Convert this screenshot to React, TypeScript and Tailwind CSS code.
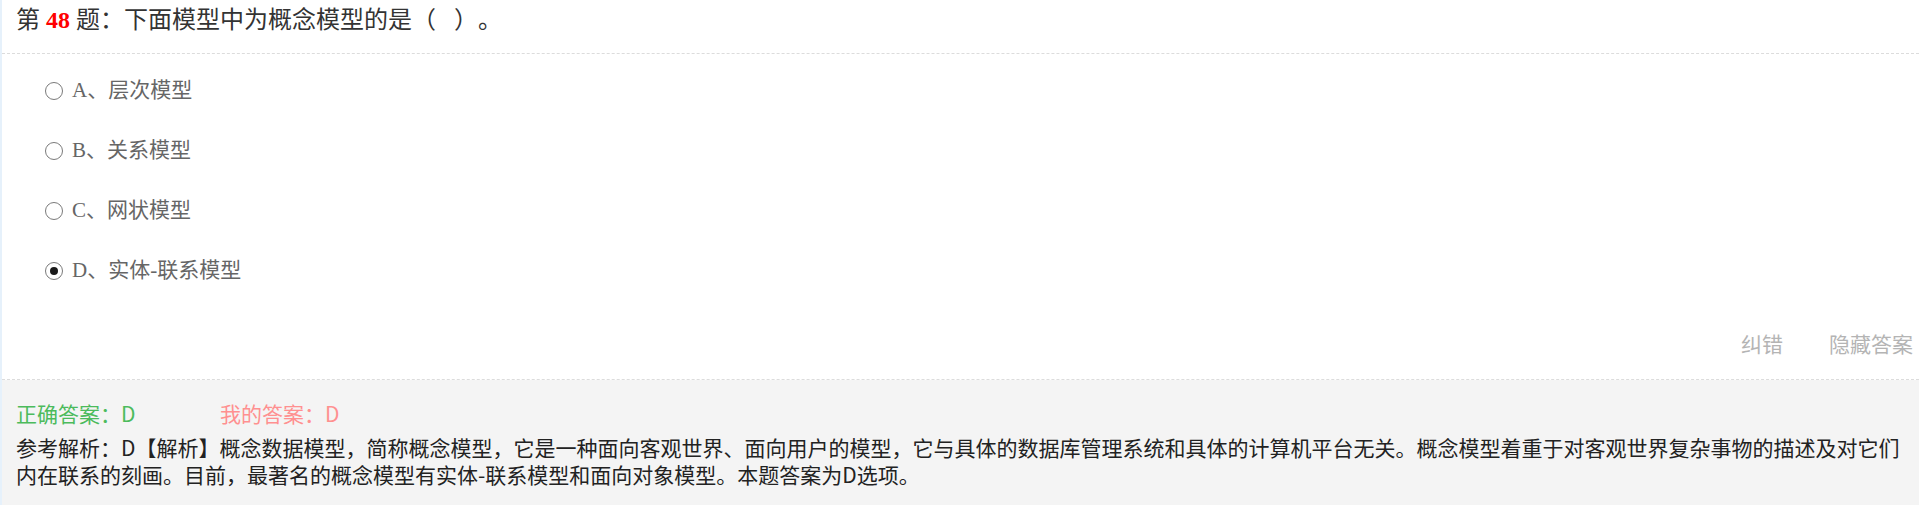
import React from 'react';

interface OptionItem {
  key: string;
  text: string;
}

const options: OptionItem[] = [
  { key: 'A', text: '层次模型' },
  { key: 'B', text: '关系模型' },
  { key: 'C', text: '网状模型' },
  { key: 'D', text: '实体-联系模型' },
];

const myAnswer = 'D';

// radio drawn by hand, native ones look different per platform
const Radio: React.FC<{ checked: boolean }> = ({ checked }) => (
  <span className="flex h-[18px] w-[18px] shrink-0 items-center justify-center rounded-full border-[1.5px] border-[#7a7a7a] bg-white">
    {checked && <span className="h-[8px] w-[8px] rounded-full bg-[#1a1a1a]" />}
  </span>
);

const App: React.FC = () => {
  return (
    <div className="w-[1919px] h-[505px] overflow-hidden border-l-2 border-[#e6f1fb] bg-white [text-spacing-trim:space-all]">
      {/* question + options */}
      <div className="h-[380px] border-b border-dashed border-[#dcdcdc] flex flex-col">
        <div
          className="h-[54px] shrink-0 border-b border-dashed border-[#dcdcdc] pl-[14px] text-[24px] leading-[40px] text-[#333]"
          style={{ fontFamily: '"Liberation Serif", "Noto Sans CJK SC", serif' }}
        >
          第 <span className="font-bold text-[#ff0000]">48</span> 题：下面模型中为概念模型的是（<span className="inline-block w-[18px]" />）。
        </div>

        <div className="pt-[7px] pl-[43px]" style={{ fontFamily: '"Liberation Serif", "Noto Sans CJK SC", serif' }}>
          {options.map((o) => (
            <div key={o.key} className="flex h-[60px] items-center gap-[9px] text-[21px] text-[#666]">
              <Radio checked={o.key === myAnswer} />
              <span>
                {o.key}、{o.text}
              </span>
            </div>
          ))}
        </div>

        <div
          className="mt-[27px] flex justify-end gap-[46px] pr-[6px] text-[21px] leading-[30px] text-[#b4b4b4]"
          style={{ fontFamily: '"Noto Sans CJK SC", sans-serif' }}
        >
          <span>纠错</span>
          <span>隐藏答案</span>
        </div>
      </div>

      {/* answer + explanation */}
      <div
        className="h-[125px] bg-[#f4f4f4] pl-[14px] pr-[4px] pt-[18px]"
        style={{ fontFamily: '"Noto Sans CJK SC", "Liberation Sans", sans-serif' }}
      >
        <div className="flex text-[21px] leading-[30px]">
          <span className="w-[204px] text-[#4cbb5c]">正确答案：D</span>
          <span className="text-[#ff9090]">我的答案：D</span>
        </div>
        <p className="mt-[6px] text-[21px] leading-[27px] text-[#222]">
          参考解析：D【解析】概念数据模型，简称概念模型，它是一种面向客观世界、面向用户的模型，它与具体的数据库管理系统和具体的计算机平台无关。概念模型着重于对客观世界复杂事物的描述及对它们内在联系的刻画。目前，最著名的概念模型有实体-联系模型和面向对象模型。本题答案为D选项。
        </p>
      </div>
    </div>
  );
};

export default App;
